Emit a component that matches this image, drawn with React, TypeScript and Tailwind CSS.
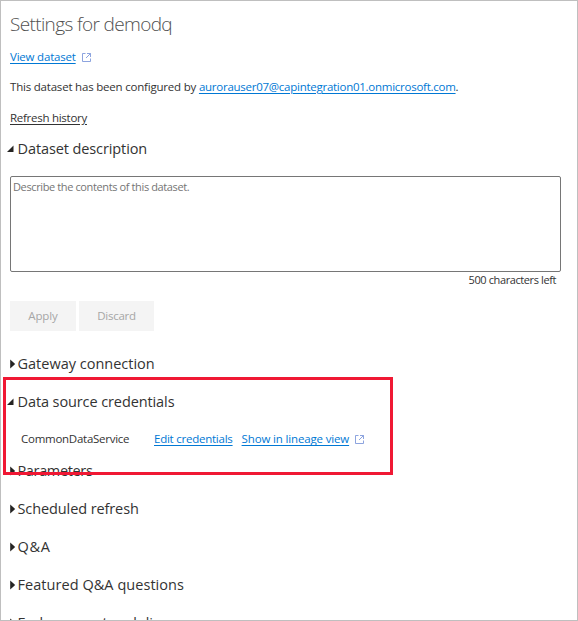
import React from "react";

const link = "text-[#0078d4] underline underline-offset-2";

function ExternalIcon() {
  return (
    <svg width="9" height="9" viewBox="0 0 9 9" fill="none" stroke="#809adb" strokeWidth="0.9" className="shrink-0">
      <path d="M3.5 .5H.5v8h8V5.5M5 .5h3.5v3.5M8.5 .5L4 5" />
    </svg>
  );
}

function Section({ title, open = false, spacing }: { title: string; open?: boolean; spacing: string }) {
  return (
    <div className="flex h-[38px] shrink-0 items-center">
      <span className="flex w-4 shrink-0 items-center">
        {open ? (
          <svg width="8" height="8" viewBox="0 0 8 8" className="ml-[5px]"><path d="M7.5 0.5V7H1Z" fill="#252423" /></svg>
        ) : (
          <svg width="6" height="10" viewBox="0 0 6 10" className="ml-[9px]"><path d="M0.2 0.5L5.2 5L0.2 9.5Z" fill="#252423" /></svg>
        )}
      </span>
      <h2 className={`ml-[0.5px] whitespace-nowrap text-[14.5px] leading-5 ${spacing}`}>{title}</h2>
    </div>
  );
}

export default function App() {
  return (
    <main className="relative flex h-[621px] w-[578px] flex-col overflow-hidden border border-[#bfbfbf] bg-white font-['Open_Sans','Noto_Sans',sans-serif] text-[11.5px] text-[#333]">
      <h1 className="mt-[9px] ml-[9px] h-7 shrink-0 text-[19px] leading-7 font-light tracking-[-0.64px] text-[#505050]">Settings for demodq</h1>
      <div className="mt-[9px] ml-[9px] flex h-5 shrink-0 items-center gap-[6px]">
        <a className={`${link} tracking-[-0.2px]`}>View dataset</a>
        <ExternalIcon />
      </div>
      <p className="mt-[10px] ml-[9px] h-5 shrink-0 leading-5 whitespace-nowrap">
        <span className="tracking-[-0.2px]">This dataset has been configured by </span>
        <a className={`${link} tracking-[-0.26px]`}>aurorauser07@capintegration01.onmicrosoft.com</a>.
      </p>
      <a className="mt-[11px] ml-[9px] h-5 shrink-0 leading-5 tracking-[-0.27px] underline underline-offset-2">Refresh history</a>
      <div className="mt-[2px] shrink-0"><Section title="Dataset description" open spacing="tracking-[-0.1px]" /></div>
      <textarea
        readOnly
        placeholder="Describe the contents of this dataset."
        className="mt-[8px] ml-[9px] h-24 w-[551px] shrink-0 resize-none rounded-[2px] border border-[#767676] px-[2px] py-[2px] text-[11px] leading-4 tracking-[-0.38px] outline-none placeholder:text-[#757575]"
      />
      <div className="mr-[21px] h-4 shrink-0 self-end text-[11px] leading-4 tracking-[-0.4px]">500 characters left</div>
      <div className="mt-[13px] ml-[9px] flex h-[30px] shrink-0 gap-[3px] text-[#a6a6a6]">
        <button className="w-[66px] bg-[#f4f4f4] tracking-[-0.1px]">Apply</button>
        <button className="w-[75px] bg-[#f4f4f4] tracking-[-0.25px]">Discard</button>
      </div>
      <div className="mt-[14px] shrink-0"><Section title="Gateway connection" spacing="tracking-[0px]" /></div>
      <Section title="Data source credentials" open spacing="tracking-[-0.1px]" />
      <div className="mt-2 mb-[3px] ml-5 flex h-5 shrink-0 items-center">
        <span className="w-[133px] tracking-[-0.26px]">CommonDataService</span>
        <a className={`${link} mr-[9px] tracking-[-0.24px]`}>Edit credentials</a>
        <a className={`${link} mr-[6px] tracking-[-0.15px]`}>Show in lineage view</a>
        <ExternalIcon />
      </div>
      <Section title="Parameters" spacing="tracking-[-0.35px]" />
      <Section title="Scheduled refresh" spacing="tracking-[-0.1px]" />
      <Section title="Q&A" spacing="tracking-[0.7px]" />
      <Section title="Featured Q&A questions" spacing="tracking-[0.05px]" />
      <Section title="Endorsement and discovery" spacing="tracking-[-0.1px]" />
      <div className="absolute top-[376px] left-[2px] h-[98px] w-[390px] border-[3px] border-[#f01834]" />
    </main>
  );
}
